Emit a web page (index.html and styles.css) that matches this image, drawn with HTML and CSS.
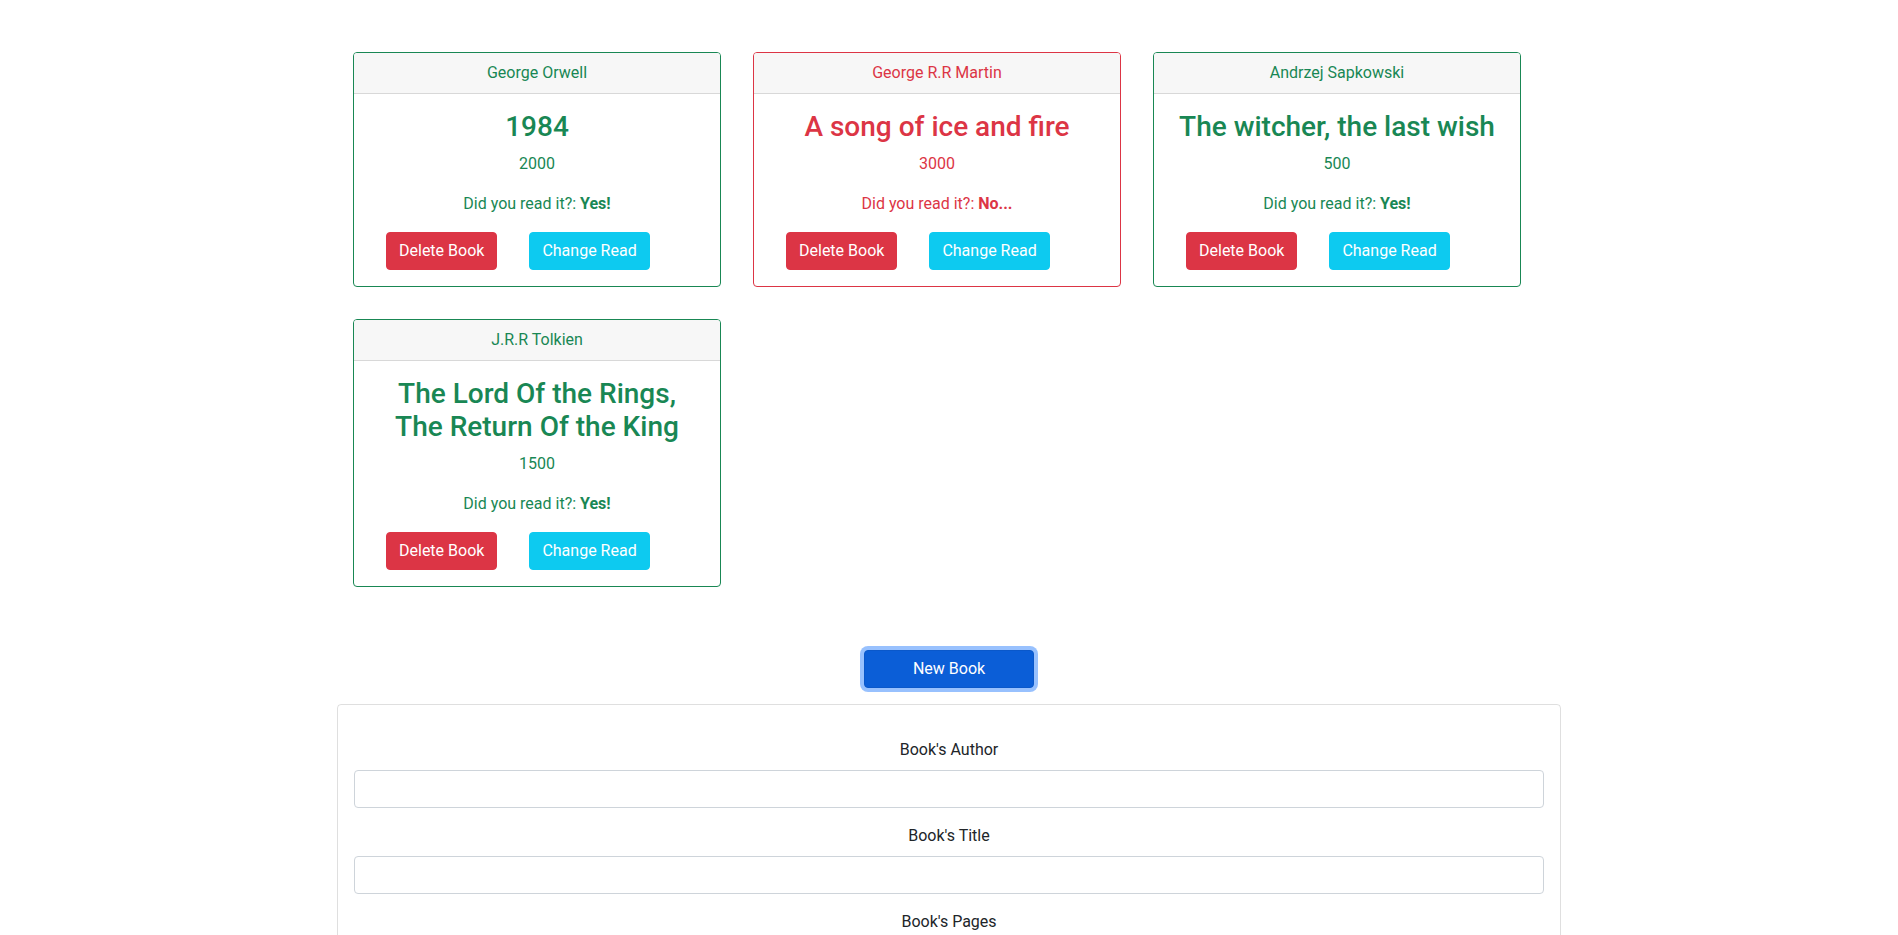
FILE: index.html
```html
<!DOCTYPE html>
<html lang="en">
<head>
<meta charset="utf-8">
<title>Books</title>
<link rel="stylesheet" href="styles.css">
</head>
<body>
<main class="page">
  <section class="book-grid">
    <article class="book book--read">
      <header class="book__author">George Orwell</header>
      <div class="book__body">
        <h3 class="book__title">1984</h3>
        <p class="book__pages">2000</p>
        <p class="book__status">Did you read it?: <b>Yes!</b></p>
        <div class="book__actions">
          <button class="btn btn--danger" type="button">Delete Book</button>
          <button class="btn btn--info" type="button">Change Read</button>
        </div>
      </div>
    </article>
    <article class="book book--unread">
      <header class="book__author">George R.R Martin</header>
      <div class="book__body">
        <h3 class="book__title">A song of ice and fire</h3>
        <p class="book__pages">3000</p>
        <p class="book__status">Did you read it?: <b>No...</b></p>
        <div class="book__actions">
          <button class="btn btn--danger" type="button">Delete Book</button>
          <button class="btn btn--info" type="button">Change Read</button>
        </div>
      </div>
    </article>
    <article class="book book--read">
      <header class="book__author">Andrzej Sapkowski</header>
      <div class="book__body">
        <h3 class="book__title">The witcher, the last wish</h3>
        <p class="book__pages">500</p>
        <p class="book__status">Did you read it?: <b>Yes!</b></p>
        <div class="book__actions">
          <button class="btn btn--danger" type="button">Delete Book</button>
          <button class="btn btn--info" type="button">Change Read</button>
        </div>
      </div>
    </article>
    <article class="book book--read">
      <header class="book__author">J.R.R Tolkien</header>
      <div class="book__body">
        <h3 class="book__title">The Lord Of the Rings, The Return Of the King</h3>
        <p class="book__pages">1500</p>
        <p class="book__status">Did you read it?: <b>Yes!</b></p>
        <div class="book__actions">
          <button class="btn btn--danger" type="button">Delete Book</button>
          <button class="btn btn--info" type="button">Change Read</button>
        </div>
      </div>
    </article>
  </section>

  <div class="new-book">
    <button class="btn btn--primary" type="button">New Book</button>
  </div>

  <form class="book-form">
    <div class="field">
      <label class="field__label" for="author">Book's Author</label>
      <input class="field__input" id="author" type="text">
    </div>
    <div class="field">
      <label class="field__label" for="title">Book's Title</label>
      <input class="field__input" id="title" type="text">
    </div>
    <div class="field">
      <label class="field__label" for="pages">Book's Pages</label>
      <input class="field__input" id="pages" type="number">
    </div>
    <div class="field">
      <label class="field__label" for="read">Did you read it?</label>
      <input class="field__input" id="read" type="text">
    </div>
  </form>
</main>
</body>
</html>
```
FILE: styles.css
```css
* {
  box-sizing: border-box;
}

body {
  margin: 0;
  font-family: Roboto, "Liberation Sans", sans-serif;
  font-size: 16px;
  line-height: 24px;
  color: #212529;
  background: #fff;
}

.page {
  width: 1224px;
  margin: 0 auto;
  padding-top: 36px;
}

.book-grid {
  display: grid;
  grid-template-columns: repeat(3, 400px);
}

.book {
  margin: 16px;
  border: 1px solid;
  border-radius: 4px;
  overflow: hidden;
  text-align: center;
}

.book--read {
  border-color: #198754;
  color: #198754;
}

.book--unread {
  border-color: #dc3545;
  color: #dc3545;
}

.book__author {
  padding: 8px 16px;
  background: #f7f7f7;
  border-bottom: 1px solid rgba(0, 0, 0, 0.125);
}

.book__body {
  padding: 16px;
}

.book__title {
  margin: 0 0 8px;
  font-size: 28px;
  line-height: 33.6px;
  font-weight: 500;
  text-wrap: balance;
}

.book__pages,
.book__status {
  margin: 0 0 16px;
}

.book__status b {
  font-weight: 700;
}

.book__actions {
  display: flex;
  justify-content: flex-start;
}

.btn {
  display: inline-block;
  margin: 0 16px;
  padding: 6px 12px;
  font-family: inherit;
  font-size: 16px;
  line-height: 24px;
  color: #fff;
  border: 1px solid transparent;
  border-radius: 4px;
  cursor: pointer;
}

.btn--danger {
  background: #dc3545;
  border-color: #dc3545;
}

.btn--info {
  background: #0dcaf0;
  border-color: #0dcaf0;
}

.new-book {
  margin: 47px 0 16px;
  text-align: center;
}

.btn--primary {
  margin: 0;
  padding: 6px 48px;
  background: #0b5ed7;
  border-color: #0a58ca;
  box-shadow: 0 0 0 4px rgba(49, 132, 253, 0.5);
}

.book-form {
  border: 1px solid rgba(0, 0, 0, 0.125);
  border-radius: 4px;
  padding: 33px 16px 16px;
}

.field {
  margin-bottom: 16px;
}

.field__label {
  display: block;
  margin-bottom: 8px;
  text-align: center;
}

.field__input {
  display: block;
  width: 100%;
  height: 38px;
  padding: 6px 12px;
  font-family: inherit;
  font-size: 16px;
  border: 1px solid #ced4da;
  border-radius: 4px;
  background: #fff;
}
```
